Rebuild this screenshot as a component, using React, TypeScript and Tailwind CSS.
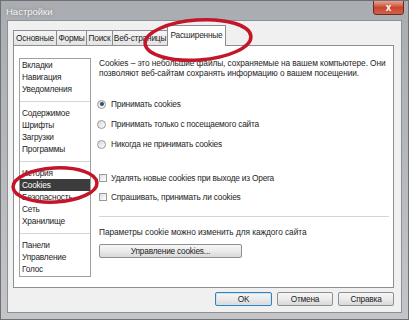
import React from 'react';

const font = { fontFamily: '"Liberation Sans", "Noto Sans", sans-serif' };

const tabs = [
  { label: 'Основные', w: 'w-[44px]' },
  { label: 'Формы', w: 'w-[31px]' },
  { label: 'Поиск', w: 'w-[27px]' },
  { label: 'Веб-страницы', w: 'w-[56px]' },
];

const groups: string[][] = [
  ['Вкладки', 'Навигация', 'Уведомления'],
  ['Содержимое', 'Шрифты', 'Загрузки', 'Программы'],
  ['История', 'Cookies', 'Безопасность', 'Сеть', 'Хранилище'],
  ['Панели', 'Управление', 'Голос'],
];

const Radio = ({ checked, label }: { checked?: boolean; label: string }) => (
  <div className="flex items-center h-[12px]">
    <span className="ml-[-2px] w-[9px] h-[9px] rounded-full border border-[#9a9a9a] bg-gradient-to-br from-[#d8d8d8] to-[#ffffff] flex items-center justify-center">
      {checked && <span className="w-[4px] h-[4px] rounded-full bg-[#2d4d6e]" />}
    </span>
    <span className="ml-[5px]">{label}</span>
  </div>
);

const Check = ({ label }: { label: string }) => (
  <div className="flex items-center h-[12px]">
    <span className="w-[8px] h-[8px] border border-[#9a9a9a] bg-gradient-to-br from-[#dedede] to-[#ffffff]" />
    <span className="ml-[4px]">{label}</span>
  </div>
);

const Button = ({ children, primary, w }: { children: React.ReactNode; primary?: boolean; w: string }) => (
  <div
    className={`${w} h-[14px] rounded-[2px] border flex items-center justify-center text-[#222] bg-gradient-to-b from-[#f6f6f6] via-[#ebebeb] to-[#d9d9d9] ${
      primary ? 'border-[#3c7fb1] shadow-[inset_0_0_0_1px_#c8e4f8]' : 'border-[#8e8f8f]'
    }`}
  >
    {children}
  </div>
);

export default function App() {
  return (
    <div
      className="relative w-[409px] h-[320px] overflow-hidden flex flex-col bg-gradient-to-b from-[#a9acb0] to-[#c3c5c8] border border-[#6e7074] text-[8.3px] tracking-[-0.2px] text-[#1e1e1e] whitespace-nowrap"
      style={font}
    >
      {/* title bar */}
      <div className="h-[19px] flex items-start justify-between pl-[5px] pr-[4px]">
        <span className="mt-[4px] text-[9.5px] tracking-normal text-[#f4f4f4] [text-shadow:0_0_3px_#7a7a7a]">Настройки</span>
        <div className="w-[31px] h-[15px] mt-[-1px] rounded-b-[3px] border border-[#6b2a24] bg-gradient-to-b from-[#e6a493] via-[#c9452f] to-[#d0614a] flex items-center justify-center text-white text-[10px] font-bold leading-none tracking-normal">
          x
        </div>
      </div>

      {/* client area */}
      <div className="mx-[6px] mb-[6px] flex-1 bg-[#f0f0f0] border border-[#8d9094] flex flex-col pl-[5px] pr-[7px]">
        {/* tabs */}
        <div className="h-[24px] flex items-end">
          {tabs.map((t) => (
            <div
              key={t.label}
              className={`${t.w} h-[15px] mr-[-1px] border border-b-0 border-[#8c8e94] bg-gradient-to-b from-[#f5f5f5] to-[#e3e3e3] flex items-center justify-center`}
            >
              {t.label}
            </div>
          ))}
          <div className="w-[59px] h-[21px] border border-b-0 border-[#8c8e94] bg-white flex items-start justify-center pt-[3px] relative top-[1px]">
            Расширенные
          </div>
        </div>

        {/* panel */}
        <div className="h-[243px] bg-white border border-[#8c8e94] flex pl-[5px] pt-[12px] overflow-hidden">
          <div className="w-[72px] shrink-0 h-[219px] border border-[#a0a0a0] flex flex-col">
            {groups.map((g, gi) => (
              <React.Fragment key={gi}>
                {gi > 0 && (
                  <div className="h-[12px] flex items-center">
                    <div className="w-full h-px bg-[#d5d5d5]" />
                  </div>
                )}
                {g.map((item) => (
                  <div
                    key={item}
                    className={`h-[12px] pl-[2px] flex items-center ${
                      item === 'Cookies' ? 'bg-[#3c3c3c] text-white' : ''
                    }`}
                  >
                    {item}
                  </div>
                ))}
              </React.Fragment>
            ))}
          </div>

          <div className="ml-[8px] flex-1 min-w-0 pr-[4px] flex flex-col">
            <p className="leading-[10px] tracking-[-0.08px]">
              Cookies – это небольшие файлы, сохраняемые на вашем компьютере. Они
              <br />
              позволяют веб-сайтам сохранять информацию о вашем посещении.
            </p>
            <div className="mt-[20px] flex flex-col gap-[8px]">
              <Radio checked label="Принимать cookies" />
              <Radio label="Принимать только с посещаемого сайта" />
              <Radio label="Никогда не принимать cookies" />
            </div>
            <div className="mt-[22px] flex flex-col gap-[7px]">
              <Check label="Удалять новые cookies при выходе из Opera" />
              <Check label="Спрашивать, принимать ли cookies" />
            </div>
            <div className="mt-[13px] h-px bg-[#d5d5d5]" />
            <div className="mt-[9px] h-[12px] flex items-center tracking-[-0.05px]">Параметры cookie можно изменить для каждого сайта</div>
            <div className="mt-[6px]">
              <Button w="w-[143px]">Управление cookies...</Button>
            </div>
          </div>
        </div>

        {/* bottom buttons */}
        <div className="mt-[4px] flex justify-end gap-[5px]">
          <Button primary w="w-[57px]">OK</Button>
          <Button w="w-[56px]">Отмена</Button>
          <Button w="w-[56px]">Справка</Button>
        </div>
      </div>

      {/* red annotation marks */}
      <svg className="absolute inset-0 pointer-events-none" width="409" height="320" viewBox="0 0 409 320">
        <ellipse cx="197" cy="39" rx="53" ry="20" transform="rotate(-4 197 39)" fill="none" stroke="#c4162a" strokeWidth="3.5" />
        <ellipse cx="54" cy="184" rx="42" ry="17" transform="rotate(-3 54 184)" fill="none" stroke="#c4162a" strokeWidth="3.5" />
      </svg>
    </div>
  );
}
